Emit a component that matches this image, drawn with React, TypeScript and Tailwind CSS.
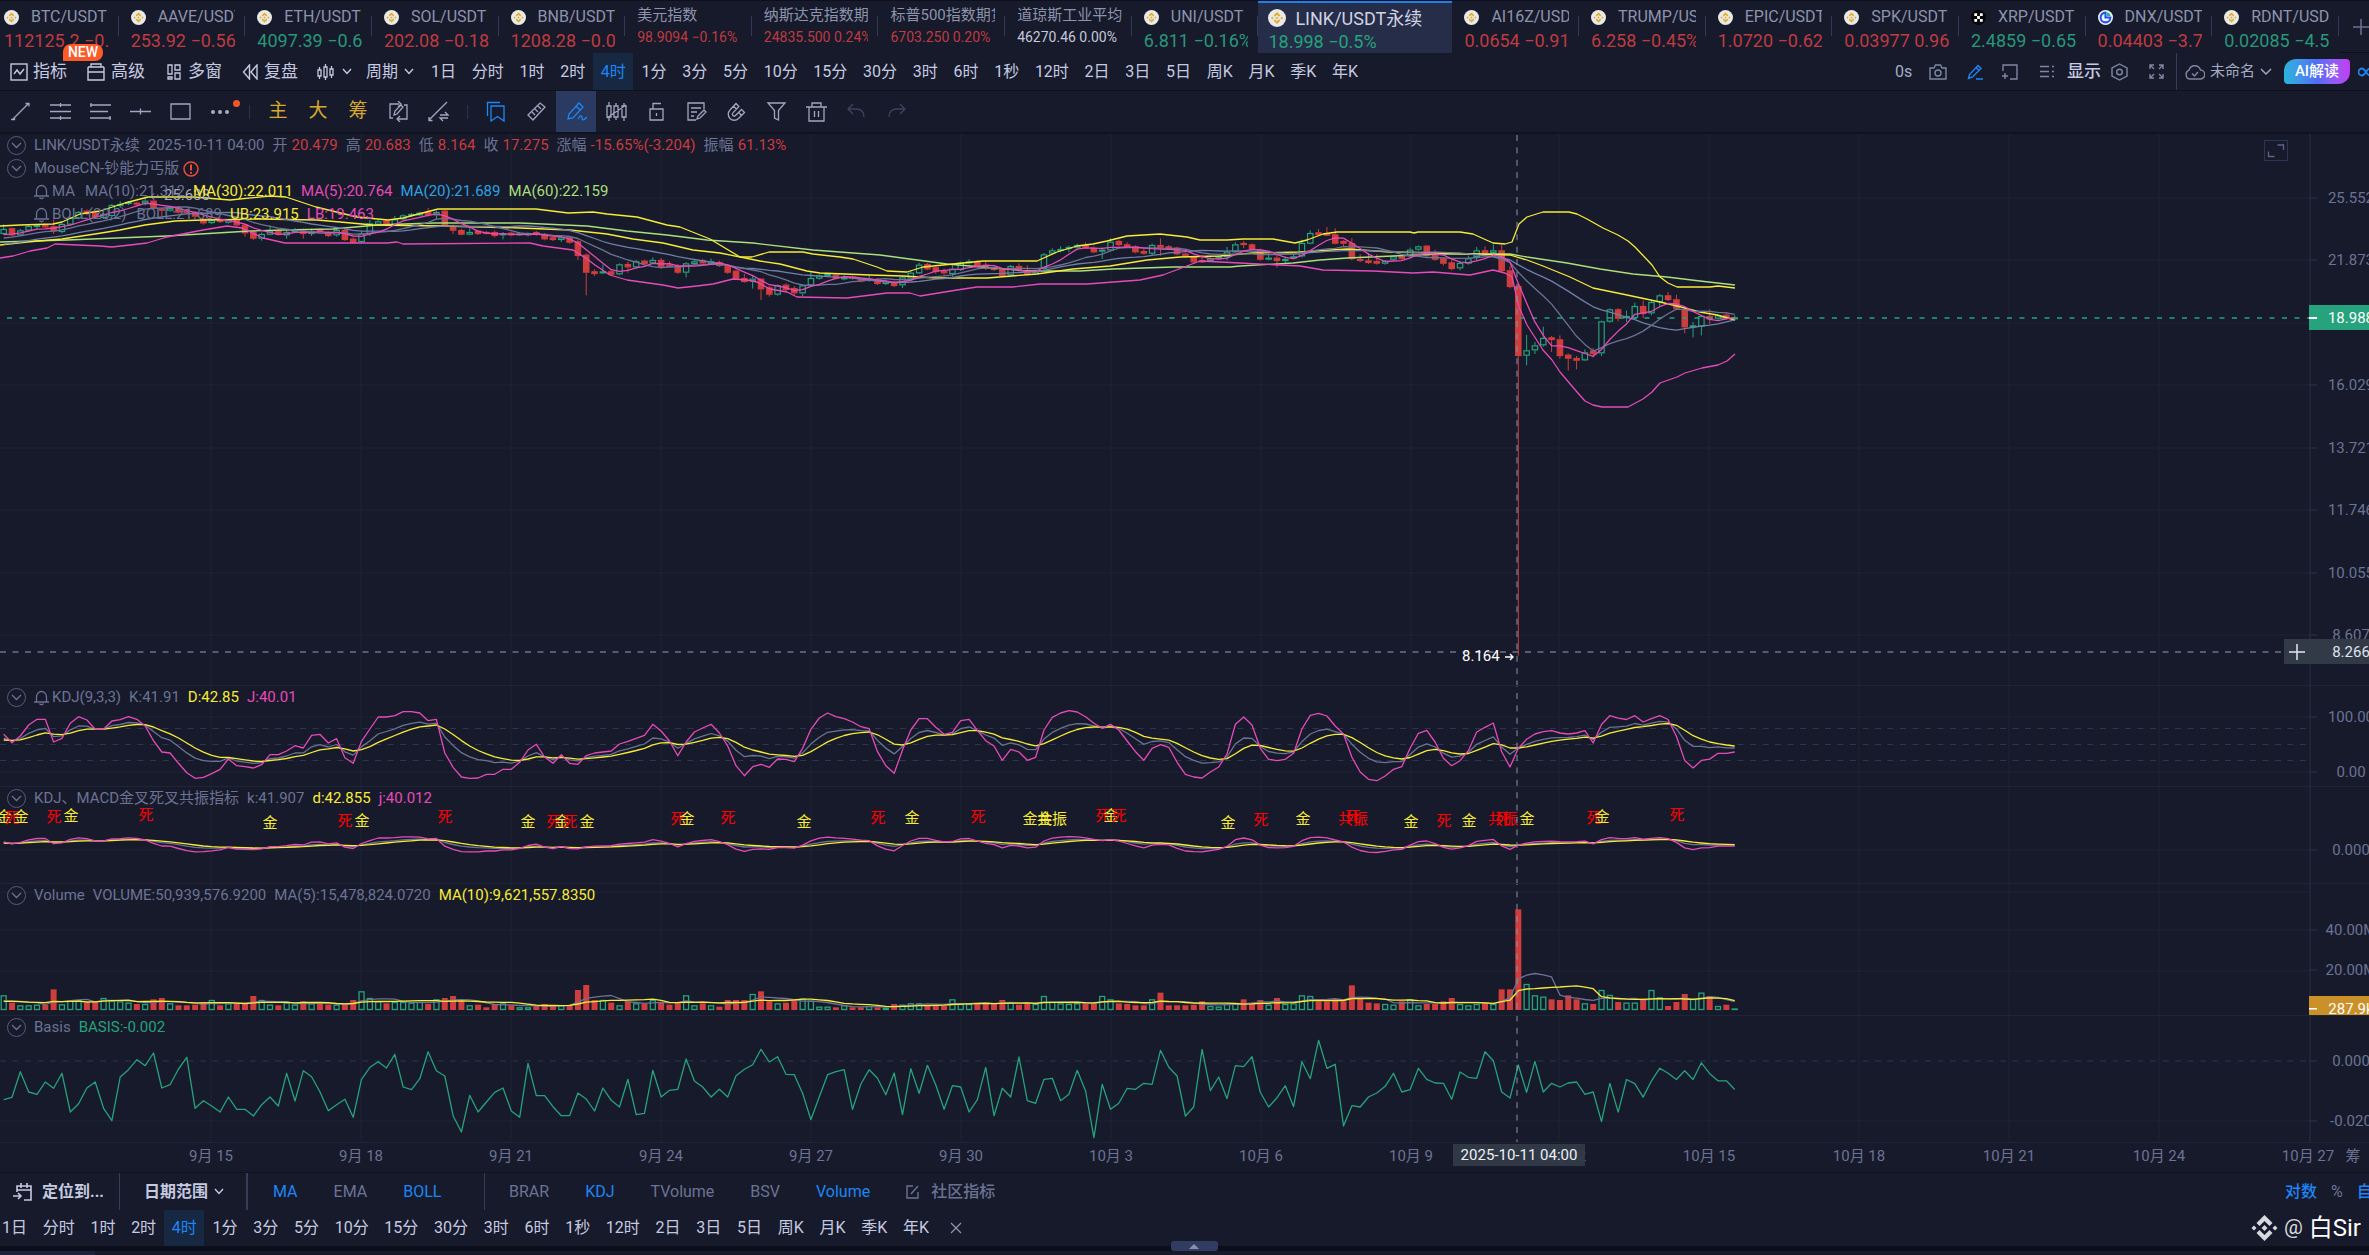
import React from 'react';

const FONT = 'font-[Roboto,"Noto_Sans_CJK_SC",sans-serif]';
const SVG_FONT = 'Roboto, "Noto Sans CJK SC", sans-serif';

const RED = '#cf3d3c';
const GREEN = '#26a27c';
const YELLOW = '#f7ec35';
const MAGENTA = '#e64bb9';
const GREY = '#6b7394';
const SLATE = '#6f7fa8';
const LIME = '#abdf7c';
const GRID = '#1d2233';

/* ---------- series data ---------- */

const STEP = 8.322;
const barX = (i: number) => 3.7 + i * STEP;

type Candle = { up: boolean; top: number; bottom: number; high: number; low: number };

function parse(base: number, text: string): Candle[] {
  return text
    .trim()
    .split(/\s+/)
    .map((item) => {
      const up = item[0] === 'g';
      const [t, b, h, l] = item.slice(1).split(',').map(Number);
      const y = (v: number) => base + v / 3;
      return { up, top: y(t), bottom: y(b), high: y(h ?? t - 3), low: y(l ?? b + 3) };
    });
}

const candles: Candle[] = [
  ...parse(
    190,
    `g117,132,103,135 r115,136,113,140 g121,136,117,138 g108,122,105,125 g105,110,103,118 r105,112 r109,124,88,132 g102,126,99,130
     g84,104 g66,85 r62,72,58,76 r68,82 g72,84 g45,78 g42,48,34,54 g36,42 r38,44 g32,40,20,46 r32,56,28,60 r56,62,54,78 g54,62
     r52,68,48,70 r62,70 r66,80 r86,100,78,104 g90,99 r88,96 g90,98 r90,106,86,110 r104,130,102,140 r124,146,120,150 g132,146,128,152
     g122,134,106,136 r122,134,118 g126,136,122,146 g120,126,114 r122,132,116,146 g124,132,116,138 r118,124,114 r126,138 g120,136,116,140
     r120,150 r146,158,142,160 g130,156,124,160 g100,132,90,138 g94,104,90,108 r92,106 g88,104,78,106 g76,88 g72,78 g68,76 r66,76,54,80
     g66,76,62,88 r62,106,60,110 r108,122,104,132 r120,134,116,136 g126,134,112,136 r122,132 r126,130 r126,138,122,142 g130,136,126,148
     r128,136 g130,134`,
  ),
  ...parse(
    210,
    `g70,76 r66,74 r72,88 r82,90 g82,90,78,96 r82,98 r94,138,88,150 r134,188,130,256 r184,192,178,198 g184,190,164,192 r184,194,178
     g163,193 r162,172,156,188 g154,172,150,176 r152,162 g150,160,142,162 r150,172,144,176 r164,168,154 r168,188,162,192 g160,188,156,202
     g154,162,150 r150,160 g154,162,146 r156,168,152 r166,188,164,192 r182,206 r204,216,192,218 g206,214,196,236 r206,238,204,270
     r232,254,228,260 g226,254 r224,240,220,244 r234,250,228,258 g226,250,222,258 g204,226,186,228 g196,206 g192,198 r194,206,190
     g202,208,196 r200,206 r206,214 g206,212,196 r208,222,204 g214,222 r216,228 g202,226,198,234 g188,206,182 g164,190,158,192 r162,178
     r172,186,170,192 r182,190,176,196 g176,192,166,200 g158,180 g154,160,148 r154,168,150,172 r164,176,154,180 r172,180 r178,198,176,200
     g168,196 r168,180,160,184 r180,194,166,196 g182,190`,
  ),
  ...parse(
    215,
    `g118,162,114,166 g106,116,100 g102,106,94,112 g96,100,92,112 g90,98,86 r90,98,82 r98,112,94 g104,110,98,132 g80,106,70,108
     r78,90,74,94 r88,96,82 r94,112 r108,116,102 g90,116,86,120 r90,98,70,122 r94,100,90 r98,118 r116,124 r124,142,122,146
     r136,140,120,144 g130,138 g124,130 g110,126,96,136 g88,112,82 r84,90,78,100 r88,102 r104,134 g128,134,116,136 r128,138,116,158
     g132,136,124,144 g124,130,118 g84,124,74,128 g54,86,46,88 r52,60,42,62 r56,60,36,62 r58,86,40,88 r78,86,76,96 r84,132,70,136
     r132,138,118 r136,144,114 r138,146,118 g138,146 g124,134 r124,132,118,134 g104,122,98 g94,104 r92,122,90,128 r116,134,104
     r130,146,128,152 r142,162,132,166 g144,160,138,166 g130,146,122 g106,126,96,136 r106,114,94 g106,114,88,124 r106,168,90,170
     r166,216,154,220`,
  ),
  ...parse(
    180,
    `r318,528,310,1427 g511,527,465,556 g496,511,486,522 g474,496,440,500 r472,480,468,516 r478,528,466,536 r524,536,520,572
     r534,542,528,568 g517,541,508,543 r512,522,504,532 g424,520,422,528 g388,425 r388,416,384,424 g408,412,392,426 g378,414,368,418
     r378,402,362,414 g366,400,360,406 g346,366,342,380 r346,360,336 r358,386,344,390 r388,442,386,460 g436,442,426,472
     g408,440,406,466 r408,418,388,432 g406,416 r404,416,396 g412,418,406,422`,
  ),
];

const upperBand =
  '0,226 20,225 53,224 62,222 80,214 100,211 125,203 148,197 194,197 230,200 270,196 286,197 316,207 357,217 388,220 403,218 438,209 536,209 568,213 593,212 607,214 637,217 667,225 680,227 710,239 740,257 752,257 769,252 803,252 813,254 840,257 853,259 877,267 887,271 907,272 923,267 963,263 983,261 1037,261 1057,252 1077,246 1093,244 1107,241 1127,236 1160,234 1187,237 1200,240 1227,240 1243,239 1273,239 1295,243 1307,240 1323,234 1337,232 1410,232 1414,233 1418,232 1460,232 1473,234 1493,243 1505,244 1512,242 1519,224 1527,217 1543,212 1569,212 1577,214 1587,219 1603,228 1618,235 1628,241 1635,247 1652,265 1660,277 1668,283 1677,287 1710,287 1718,286 1735,288';
const lowerBand =
  '0,258 13,256 30,251 47,248 55,244 100,246 112,247 130,245 147,243 167,237 203,230 227,226 242,228 263,238 285,243 387,243 397,242 403,244 530,243 543,246 573,250 587,259 595,265 610,275 627,280 663,285 678,288 697,286 713,284 733,279 747,280 757,282 770,289 787,292 797,297 847,298 887,293 910,293 920,296 957,290 977,287 1013,287 1040,284 1073,284 1087,284 1140,280 1163,275 1200,261 1240,263 1300,266 1323,270 1373,271 1413,273 1433,272 1470,275 1493,270 1505,273 1512,277 1519,307 1527,325 1543,350 1552,360 1560,372 1577,392 1585,401 1593,405 1602,407 1628,407 1643,399 1652,392 1660,383 1677,377 1685,373 1702,368 1718,365 1727,361 1735,354';
const ma30 =
  '0,245 27,242 62,239 95,234 120,230 145,225 175,221 203,220 260,219 317,220 340,222 373,225 443,226 520,228 570,230 607,234 633,239 663,243 693,250 720,253 760,261 780,264 807,271 820,273 870,275 903,276 937,278 987,278 1037,274 1073,269 1110,266 1147,260 1180,257 1220,256 1253,253 1300,252 1347,249 1390,252 1440,253 1510,255 1527,260 1543,266 1570,277 1593,288 1627,295 1660,302 1677,306 1700,312 1717,315 1735,320';
const ma60 =
  '0,242 33,241 67,240 117,238 167,236 217,233 250,231 283,230 333,229 377,225 433,223 483,223 520,223 543,224 587,226 627,231 667,235 707,240 753,243 813,250 880,255 947,264 993,268 1027,271 1080,271 1113,269 1173,267 1230,267 1240,266 1293,263 1320,260 1347,258 1393,256 1440,254 1510,254 1527,257 1567,263 1600,269 1633,274 1667,277 1700,281 1735,285';

function average(values: number[], n: number, before: (k: number) => number): number[] {
  return values.map((_, i) => {
    let sum = 0;
    for (let k = 0; k < n; k++) sum += i - k >= 0 ? values[i - k] : before(k - i);
    return sum / n;
  });
}

const closes = candles.map((c) => (c.up ? c.top : c.bottom));
const before = (k: number) => 233 + k * 1.2;
const ma5 = average(closes, 5, before);
const ma10 = average(closes, 10, before);
const ma20 = average(closes, 20, before);

const points = (ys: number[]) => ys.map((y, i) => `${barX(i).toFixed(1)},${y.toFixed(1)}`).join(' ');

const jLine = [
  ...[
    193, 218, 198, 165, 148, 148, 216, 205, 160, 140, 150, 178, 178, 153, 149, 140, 148, 168, 212, 246, 249, 280, 308, 325, 322, 311,
    298, 267, 287, 290, 294, 284, 254, 254, 243, 227, 234, 196, 193, 219, 206, 263, 280, 214, 177, 141, 141, 137, 125, 125, 129, 152,
    148, 249, 292, 321, 325, 324, 313, 313, 298, 298, 277, 240, 223, 261, 280, 254, 280, 283, 257, 249, 246, 243, 222, 214, 205, 196,
    163, 183, 213, 257, 216, 186, 174, 163, 189, 228, 287, 317, 290, 283, 292, 267, 268, 275, 235, 178, 144, 129, 140, 146, 156, 170,
    176, 245, 287, 310, 240, 180, 146, 146, 172, 193, 187, 152, 148, 181, 212, 228, 271, 238, 246, 271, 262, 180, 142, 129, 122, 126,
    140, 160, 175, 163, 180, 213, 245, 271, 235, 224, 232, 277, 313, 321, 324, 306, 291, 252, 163, 141, 165, 235, 268, 272, 268, 250,
    177, 136, 130, 138, 168, 192, 262, 306, 328, 332, 318, 298, 290, 235, 190, 181, 216, 265, 287, 272, 242, 186, 172, 159, 245, 291,
    235, 208, 192, 185, 182, 189, 192, 189, 182, 219,
  ].map((v) => 670 + v / 3),
  ...[298, 277, 283, 286, 277, 292, 284, 277, 286, 326, 384, 402, 384, 381, 367, 367, 364].map((v) => 600 + v * 0.4177),
];
const dLine: number[] = [];
jLine.forEach((j, i) => dLine.push(i === 0 ? 740 : (6 * dLine[i - 1] + j) / 7));
const kLine = jLine.map((j, i) => (j + 2 * dLine[i]) / 3);
const small = (ys: number[]) => ys.map((y) => 850.5 - ((772 - y) / 55) * 12.5);

const basis = [
  ...[
    299, 292, 215, 276, 283, 246, 265, 220, 336, 311, 264, 246, 325, 362, 231, 209, 179, 197, 159, 264, 254, 207, 172, 325, 302, 318,
    336, 291, 328, 328, 348, 314, 291, 318, 220, 303, 212, 230, 275, 332, 314, 298, 352, 238, 202, 185, 204, 163, 261, 269, 236, 155,
    212, 228, 347, 396, 286, 336, 306, 277, 264, 333, 352, 190, 287, 287, 320, 347, 347, 279, 297, 333, 264, 301, 321, 238, 344, 340,
    211, 291, 271, 268, 177, 243, 261, 291, 268, 291, 227, 208, 194, 148, 186, 170, 223, 224, 280, 359, 290, 224, 215, 209, 328, 252,
    209, 235, 284, 219, 344, 206, 280, 196, 255, 328, 257, 261, 336, 299, 202, 347, 265, 291, 171, 302, 310, 238, 235, 302, 283, 211,
    273, 413, 253, 328, 310, 265, 268, 250, 253, 151, 202, 228, 348, 321, 148, 272, 231, 296, 197, 200, 170, 277, 321, 293, 257, 320,
    185, 236, 121, 205, 193, 378, 317, 321, 291, 279, 259, 220, 276, 269, 205, 238, 249, 250, 298, 216, 232, 235, 155, 182, 276, 294,
    195, 277, 184, 276, 250, 261, 249, 246, 283, 276,
  ].map((v) => 1000 + v / 3),
  ...[1249, 1157, 1226, 1148, 1158, 1190, 1151, 1121, 1133, 1148, 1127, 1148, 1108, 1134, 1151, 1151, 1172].map((v) => 600 + v * 0.4177),
];

const volumes = [
  44, 22, 14, 14, 16, 16, 62, 17, 28, 30, 22, 26, 36, 28, 26, 22, 18, 18, 32, 36, 20, 14, 14, 16, 24, 30, 14, 20, 18, 22, 42, 30, 16, 14,
  22, 16, 26, 20, 18, 16, 16, 18, 30, 56, 36, 26, 20, 24, 24, 22, 24, 18, 32, 36, 42, 28, 14, 16, 8, 18, 20, 14, 8, 8, 12, 18, 12, 14, 14,
  60, 75, 30, 30, 22, 14, 26, 20, 18, 30, 22, 16, 24, 44, 14, 20, 14, 10, 30, 30, 30, 48, 56, 26, 20, 22, 30, 34, 28, 10, 10, 8, 14, 8, 8,
  12, 8, 6, 18, 16, 20, 20, 16, 16, 12, 32, 18, 18, 22, 20, 18, 30, 22, 16, 18, 18, 42, 24, 20, 18, 20, 22, 18, 42, 32, 20, 18, 14, 14,
  32, 52, 14, 14, 14, 16, 26, 12, 10, 18, 20, 32, 22, 30, 16, 36, 18, 20, 44, 42, 26, 26, 32, 26, 74, 34, 22, 20, 18, 16, 26, 32, 14, 18,
  18, 26, 36, 18, 14, 18, 22, 18, 62, 62, 302, 78, 44, 40, 32, 30, 44, 32, 20, 18, 60, 45, 24, 22, 22, 34, 60, 38, 12, 24, 48, 34, 52, 42,
  12, 16, 4,
];
const volMa5 = average(volumes, 5, () => 24).map((v) => 1010 - v / 3);
const volMa10 = average(volumes, 10, () => 24).map((v) => 1010 - v / 3);

/* [label, x, y, colour] */
const crossMarks: [string, number, number, string][] = [
  ['金', 4, 816, YELLOW], ['死', 12, 817, 'red'], ['金', 21, 816, YELLOW], ['死', 54, 816, 'red'], ['金', 71, 815, YELLOW],
  ['死', 146, 814, 'red'], ['金', 270, 822, YELLOW], ['死', 345, 820, 'red'], ['金', 362, 820, YELLOW], ['死', 445, 816, 'red'],
  ['金', 528, 821, YELLOW], ['死', 554, 821, 'red'], ['金', 562, 821, YELLOW], ['死', 570, 821, 'red'], ['金', 587, 821, YELLOW],
  ['死', 678, 818, 'red'], ['金', 687, 818, YELLOW], ['死', 728, 817, 'red'], ['金', 804, 821, YELLOW], ['死', 878, 817, 'red'],
  ['金', 912, 817, YELLOW], ['死', 978, 816, 'red'], ['金', 1030, 818, YELLOW], ['金', 1045, 818, YELLOW], ['共振', 1052, 818, YELLOW],
  ['死', 1103, 815, 'red'], ['金', 1111, 815, YELLOW], ['死', 1119, 815, 'red'], ['金', 1228, 822, YELLOW], ['死', 1261, 819, 'red'],
  ['金', 1303, 818, YELLOW], ['共振', 1353, 818, 'red'], ['死', 1353, 816, 'red'], ['金', 1411, 821, YELLOW], ['死', 1444, 820, 'red'],
  ['金', 1469, 820, YELLOW], ['共振', 1503, 818, 'red'], ['死', 1503, 818, 'red'], ['金', 1527, 818, YELLOW], ['死', 1594, 817, 'red'],
  ['金', 1602, 816, YELLOW], ['死', 1677, 814, 'red'],
];

const gridX = [211, 361, 511, 661, 811, 961, 1111, 1261, 1411, 1559, 1709, 1859, 2009, 2159];
const dates: [string, number][] = [
  ['9月 15', 211], ['9月 18', 361], ['9月 21', 511], ['9月 24', 661], ['9月 27', 811], ['9月 30', 961], ['10月 3', 1111],
  ['10月 6', 1261], ['10月 9', 1411], ['10月 12', 1560], ['10月 15', 1709], ['10月 18', 1859], ['10月 21', 2009], ['10月 24', 2159],
  ['10月 27', 2308],
];

/* ---------- chart parts ---------- */

type PaneProps = {
  top: number;
  height: string;
  label: string;
  rows: number[];
  ticks: [string, number][];
  legend: React.ReactNode;
  axis?: React.ReactNode;
  children: React.ReactNode;
};

function Pane({ top, height, label, rows, ticks, legend, axis, children }: PaneProps) {
  return (
    <section aria-label={label} className={`relative flex w-full border-b border-[#1f2436] ${height}`}>
      <svg className="h-full min-w-0 flex-1" role="img" aria-label={label}>
        <g transform={`translate(0 ${-top})`}>
          {gridX.map((x) => (
            <line key={x} x1={x} x2={x} y1={0} y2={1200} stroke={GRID} strokeWidth={1.5} />
          ))}
          {rows.map((y) => (
            <line key={y} x1={0} x2="100%" y1={y} y2={y} stroke={GRID} strokeWidth={1.5} />
          ))}
          {children}
          <line x1={1517} x2={1517} y1={135} y2={1142} stroke="#8b93a5" strokeWidth={1} strokeDasharray="6 6.4" />
        </g>
      </svg>
      <svg className="h-full w-[60px] shrink-0" aria-hidden="true" fontFamily={SVG_FONT} fontSize={15}>
        <g transform={`translate(0 ${-top})`}>
          <rect x={0} y={0} width={2} height={1200} fill="#1f2436" />
          {ticks.map(([text, y]) => (
            <g key={text + y}>
              <line x1={0} x2={8} y1={y} y2={y} stroke="#262b40" strokeWidth={1.5} />
              <text x={42} y={y + 5} textAnchor="middle" fill="#6b7394">{text}</text>
            </g>
          ))}
          {axis}
        </g>
      </svg>
      <div className="pointer-events-none absolute left-0 top-0 flex flex-col pl-[7px] text-[15px] leading-[23px] text-[#6b7394]">{legend}</div>
    </section>
  );
}

const Line = ({ p, c }: { p: string; c: string }) => <polyline points={p} fill="none" stroke={c} strokeWidth={1.3} strokeLinejoin="round" />;

function Toggle() {
  return (
    <button aria-label="折叠指标" className="pointer-events-auto mr-2 flex h-[19px] w-[19px] shrink-0 items-center justify-center rounded-full border border-[#555c7a]">
      <svg width="11" height="7" viewBox="0 0 11 7" fill="none" stroke="#6b7394" strokeWidth="1.3"><path d="M1 1l4.500 4.500L10 1" /></svg>
    </button>
  );
}

const Bell = () => (
  <svg className="mr-[3px] shrink-0" width="15" height="16" viewBox="0 0 15 16" fill="none" stroke="#6b7394" strokeWidth="1.300">
    <path d="M0 12h15M2.500 12V7a5 5.500 0 0 1 10 0v5M5.500 13.500a2.200 2 0 0 0 4 0" />
  </svg>
);

const LegendRow = ({ children }: { children: React.ReactNode }) => <div className="flex h-[23px] items-center whitespace-nowrap">{children}</div>;

function Charts() {
  return (
    <main className="flex flex-col bg-[#171a2b]">
      <Pane
        top={134}
        height="h-[552px]"
        label="LINK/USDT 永续 K线"
        rows={[198, 260, 323, 385, 448, 510, 573, 635]}
        ticks={[['25.552', 198], ['21.873', 260], ['16.029', 385], ['13.721', 448], ['11.746', 510], ['10.055', 573], ['8.607', 635]]}
        axis={
          <>
            <rect x={0} y={305} width={64} height={25} fill={GREEN} />
            <rect x={0} y={317} width={8} height={2} fill="#fff" />
            <text x={42} y={323} textAnchor="middle" fill="#fff">18.988</text>
            <rect x={0} y={639} width={64} height={25} fill="#323a47" />
            <text x={42} y={657} textAnchor="middle" fill="#dfe3ee">8.266</text>
          </>
        }
        legend={
          <>
            <LegendRow>
              <Toggle />
              <span className="mr-2">LINK/USDT永续</span>
              <span className="mr-2">2025-10-11 04:00</span>
              {[['开', '20.479'], ['高', '20.683'], ['低', '8.164'], ['收', '17.275'], ['涨幅', '-15.65%(-3.204)'], ['振幅', '61.13%']].map(([k, v]) => (
                <span key={k} className="mr-2 flex gap-1"><span>{k}</span><span className="text-[#c93b3e]">{v}</span></span>
              ))}
            </LegendRow>
            <LegendRow>
              <Toggle />
              <span className="mr-1">MouseCN-钞能力丐版</span>
              <svg width="16" height="16" viewBox="0 0 16 16" fill="none" stroke="#ef4b35" strokeWidth="1.500"><circle cx="8" cy="8" r="7" /><path d="M8 3.500v6M8 11v1.700" strokeWidth="2" /></svg>
            </LegendRow>
            <div className="flex h-[23px] items-center gap-2 whitespace-nowrap pl-[27px]">
              <span className="mr-[2px] flex items-center"><Bell />MA</span>
              <span>MA(10):21.312</span>
              <span className="text-[#f7ec35]">MA(30):22.011</span>
              <span className="text-[#e64bb9]">MA(5):20.764</span>
              <span className="text-[#2ca2e2]">MA(20):21.689</span>
              <span className="text-[#abdf7c]">MA(60):22.159</span>
            </div>
            <div className="flex h-[23px] items-center gap-2 whitespace-nowrap pl-[27px]">
              <span className="mr-[2px] flex items-center"><Bell />BOLL(20,2)</span>
              <span>BOLL:21.689</span>
              <span className="text-[#f7ec35]">UB:23.915</span>
              <span className="text-[#e64bb9]">LB:19.463</span>
            </div>
          </>
        }
      >
        <line x1={0} x2="100%" y1={652} y2={652} stroke="#69728a" strokeWidth={1.5} strokeDasharray="6 6.500" />
        {candles.map((c, i) => {
          const x = barX(i);
          const h = Math.max(c.bottom - c.top, 1.5);
          return (
            <g key={i} stroke={c.up ? GREEN : RED}>
              <line x1={x} x2={x} y1={c.high} y2={c.top} />
              <line x1={x} x2={x} y1={c.bottom} y2={c.low} />
              <rect x={x - 2.7} y={c.top + 0.5} width={5.400} height={Math.max(h - 1, 1)} fill={c.up ? '#171a2b' : RED} strokeWidth={1.2} />
            </g>
          );
        })}
        <line x1={0} x2="100%" y1={318} y2={318} stroke={GREEN} strokeWidth={1.3} strokeDasharray="5 7.500" strokeDashoffset={-7} />
        <Line p={ma60} c={LIME} />
        <Line p={ma30} c={YELLOW} />
        <Line p={upperBand} c={YELLOW} />
        <Line p={points(ma20)} c={SLATE} />
        <Line p={points(ma10)} c={GREY} />
        <Line p={lowerBand} c={MAGENTA} />
        <Line p={points(ma5)} c={MAGENTA} />
        <g fontFamily={SVG_FONT} fontSize={15}>
          <path d="M151 196.500h8M154 193.500l-3 3 3 3" stroke="#a6abc0" fill="none" />
          <text x={164} y={200} fill="#a6abc0">25.638</text>
          <text x={1462} y={661} fill="#fff">8.164</text>
          <path d="M1505 657h8M1510 654l3 3-3 3" stroke="#fff" fill="none" strokeWidth={1.4} />
        </g>
      </Pane>

      <Pane
        top={686}
        height="h-[101px]"
        label="KDJ"
        rows={[717, 772]}
        ticks={[['100.00', 717], ['0.00', 772]]}
        legend={
          <LegendRow>
            <Toggle /><Bell />
            <span className="mr-2">KDJ(9,3,3)</span><span className="mr-2">K:41.91</span>
            <span className="mr-2 text-[#f7ec35]">D:42.85</span><span className="text-[#e64bb9]">J:40.01</span>
          </LegendRow>
        }
      >
        {[728.5, 744.5, 760.5].map((y) => (
          <line key={y} x1={0} x2="100%" y1={y} y2={y} stroke="#2d3552" strokeDasharray="6 6.500" />
        ))}
        <Line p={points(kLine)} c={GREY} />
        <Line p={points(dLine)} c={YELLOW} />
        <Line p={points(jLine)} c={MAGENTA} />
      </Pane>

      <Pane
        top={787}
        height="h-[97px]"
        label="KDJ、MACD金叉死叉共振指标"
        rows={[850]}
        ticks={[['0.000', 850]]}
        legend={
          <LegendRow>
            <Toggle />
            <span className="mr-2">KDJ、MACD金叉死叉共振指标</span><span className="mr-2">k:41.907</span>
            <span className="mr-2 text-[#f7ec35]">d:42.855</span><span className="text-[#e64bb9]">j:40.012</span>
          </LegendRow>
        }
      >
        <Line p={points(small(kLine))} c={GREY} />
        <Line p={points(small(dLine))} c={YELLOW} />
        <Line p={points(small(jLine))} c={MAGENTA} />
        <g fontFamily={SVG_FONT} fontSize={15} textAnchor="middle">
          {crossMarks.map(([t, x, y, c], i) => (
            <text key={i} x={x} y={y + 6} fill={c}>{t}</text>
          ))}
        </g>
      </Pane>

      <Pane
        top={884}
        height="h-[132px]"
        label="Volume"
        rows={[892, 930, 971]}
        ticks={[['40.00M', 930], ['20.00M', 970]]}
        axis={
          <>
            <rect x={0} y={996} width={64} height={19} fill="#cc9029" />
            <rect x={0} y={1008} width={8} height={1.500} fill="#fff" />
            <text x={42} y={1014} textAnchor="middle" fill="#fff">287.9k</text>
          </>
        }
        legend={
          <LegendRow>
            <Toggle />
            <span className="mr-2">Volume</span><span className="mr-2">VOLUME:50,939,576.9200</span>
            <span className="mr-2">MA(5):15,478,824.0720</span><span className="text-[#f7ec35]">MA(10):9,621,557.8350</span>
          </LegendRow>
        }
      >
        {volumes.map((v, i) => {
          const up = candles[i]?.up;
          const h = Math.max(v / 3, 1.5);
          return up ? (
            <rect key={i} x={barX(i) - 2.5} y={1010.500 - h} width={5} height={h - 1} fill="#171a2b" stroke={GREEN} strokeWidth={1.3} />
          ) : (
            <rect key={i} x={barX(i) - 3} y={1010 - h} width={6} height={h} fill={RED} />
          );
        })}
        <Line p={points(volMa5)} c={GREY} />
        <Line p={points(volMa10)} c={YELLOW} />
      </Pane>

      <Pane
        top={1016}
        height="h-[127px]"
        label="Basis"
        rows={[1121]}
        ticks={[['0.000', 1061], ['-0.020', 1121]]}
        legend={
          <LegendRow>
            <Toggle />
            <span className="mr-2">Basis</span><span className="text-[#26a27c]">BASIS:-0.002</span>
          </LegendRow>
        }
      >
        <line x1={0} x2="100%" y1={1061} y2={1061} stroke="#2d3552" strokeDasharray="6 6.500" />
        <Line p={points(basis)} c={GREEN} />
      </Pane>

      <div className="relative h-[29px]">
        <svg className="h-full w-full" fontFamily={SVG_FONT} fontSize={15} textAnchor="middle" role="img" aria-label="时间轴">
          {dates.map(([t, x]) => (
            <text key={t} x={x} y={18} fill="#6b7394">{t}</text>
          ))}
          <text x={2353} y={18} fill="#6b7394">筹</text>
        </svg>
        <span className="absolute left-[1453px] top-px flex h-[22px] w-[132px] items-center justify-center bg-[#323a47]/95 text-[15px] text-[#eceff6]">2025-10-11 04:00</span>
      </div>

      <button aria-label="展开图表" className="absolute right-[81px] top-[140px] h-[21px] w-6 border border-[#2b3654]">
        <svg width="22" height="19" viewBox="0 0 22 19" fill="none" stroke="#5b6688" strokeWidth="1.300"><path d="M12.500 4h6v5M3.500 10.500v5h6" /></svg>
      </button>
      <button aria-label="添加提醒" className="absolute right-[60px] top-[639px] flex h-[25px] w-[25px] items-center justify-center bg-[#323a47]">
        <svg width="16" height="16" viewBox="0 0 16 16" stroke="#e4e7ef" strokeWidth="1.500"><path d="M8 0v16M0 8h16" /></svg>
      </button>
    </main>
  );
}

/* ---------- ticker strip ---------- */

function CoinIcon({ kind }: { kind?: string }) {
  if (kind === 'x')
    return (
      <svg className="h-full w-full" viewBox="0 0 16 16"><circle cx="8" cy="8" r="8" fill="#05060a" /><path d="M3.500 3.500h3v3h-3zM9.500 3.500h3v3h-3zM6.500 6.500h3v3h-3zM3.500 9.500h3v3h-3zM9.500 9.500h3v3h-3z" fill="#fff" /></svg>
    );
  if (kind === 'd')
    return (
      <svg className="h-full w-full" viewBox="0 0 16 16"><circle cx="8" cy="8" r="8" fill="#eef1f8" /><path d="M8 2.800a5.200 5.200 0 1 0 5.200 5.200H8z" fill="none" stroke="#2354e6" strokeWidth="2.200" /><path d="M9.500 2.500a5 5 0 0 1 4 4h-4z" fill="#23b58c" /></svg>
    );
  return (
    <svg className="h-full w-full" viewBox="0 0 16 16">
      <circle cx="8" cy="8" r="8" fill="#e9e9ea" />
      <path d="M8 2.700 5 5.700l1.200 1.200L8 5.100l1.800 1.800L11 5.700zM3.800 6.800 2.600 8l1.200 1.200L5 8zM8 6.800 6.800 8 8 9.200 9.200 8zM12.200 6.800 11 8l1.200 1.200L13.400 8zM6.200 9.100 5 10.300l3 3 3-3-1.200-1.200L8 10.900z" fill="#e3ac1f" />
    </svg>
  );
}

type Tick = { n: string; v: string; c: 'r' | 'g' | 'w'; idx?: boolean; icon?: string };
const tickers: Tick[] = [
  { n: 'BTC/USDT', v: '112125.2 −0.36%', c: 'r' },
  { n: 'AAVE/USDT', v: '253.92 −0.56%', c: 'r' },
  { n: 'ETH/USDT', v: '4097.39 −0.6%', c: 'g' },
  { n: 'SOL/USDT', v: '202.08 −0.18%', c: 'r' },
  { n: 'BNB/USDT', v: '1208.28 −0.09%', c: 'r' },
  { n: '美元指数', v: '98.9094 −0.16%', c: 'r', idx: true },
  { n: '纳斯达克指数期', v: '24835.500 0.24%', c: 'r', idx: true },
  { n: '标普500指数期货', v: '6703.250 0.20%', c: 'r', idx: true },
  { n: '道琼斯工业平均', v: '46270.46 0.00%', c: 'w', idx: true },
  { n: 'UNI/USDT', v: '6.811 −0.16%', c: 'g' },
  { n: 'LINK/USDT永续', v: '18.998 −0.5%', c: 'g' },
  { n: 'AI16Z/USDT', v: '0.0654 −0.91%', c: 'r' },
  { n: 'TRUMP/USDT', v: '6.258 −0.45%', c: 'r' },
  { n: 'EPIC/USDT', v: '1.0720 −0.62%', c: 'r' },
  { n: 'SPK/USDT', v: '0.03977 0.96%', c: 'r' },
  { n: 'XRP/USDT', v: '2.4859 −0.65%', c: 'g', icon: 'x' },
  { n: 'DNX/USDT', v: '0.04403 −3.7%', c: 'r', icon: 'd' },
  { n: 'RDNT/USDT', v: '0.02085 −4.5%', c: 'g' },
];
const tone = { r: 'text-[#bf3b40]', g: 'text-[#28977a]', w: 'text-[#c4c8da]' };

function Ticker({ t }: { t: Tick }) {
  if (t.n.startsWith('LINK'))
    return (
      <button className="flex w-[194px] shrink-0 flex-col border-t-2 border-[#1c80ea] bg-[#252d48] pl-[10px] pt-[2px] text-left">
        <span className="flex h-[26px] items-center gap-[9px] whitespace-nowrap text-[18px] text-[#cfd3e4]"><span className="h-[18px] w-[18px]"><CoinIcon /></span>{t.n}</span>
        <span className="text-[18px] leading-[22px] text-[#26a27c]">{t.v}</span>
      </button>
    );
  return (
    <button className="relative min-w-0 flex-1 pl-3 pr-[10px] text-left">
      <span className="flex h-full flex-col overflow-hidden whitespace-nowrap">
        {t.idx ? (
          <>
            <span className="mt-[3px] h-[22px] text-[15px] leading-[22px] text-[#8d93ab]">{t.n}</span>
            <span className={`text-[14px] leading-[22px] ${tone[t.c]}`}>{t.v}</span>
          </>
        ) : (
          <>
            <span className="mt-[3px] flex h-[26px] items-center gap-3 text-[16px] leading-[26px] text-[#8d93ab]"><span className="h-[15px] w-[15px] shrink-0"><CoinIcon kind={t.icon} /></span>{t.n}</span>
            <span className={`text-[18px] leading-[22px] ${tone[t.c]}`}>{t.v}</span>
          </>
        )}
      </span>
      <span className="absolute right-0 top-[15px] h-5 w-px bg-[#333a57]" />
    </button>
  );
}

/* ---------- toolbars ---------- */

const Ico = ({ w = 20, h = 20, c = 'currentColor', sw = '1.4', children }: { w?: number; h?: number; c?: string; sw?: string; children: React.ReactNode }) => (
  <svg className="shrink-0" width={w} height={h} viewBox={`0 0 ${w} ${h}`} fill="none" stroke={c} strokeWidth={sw} aria-hidden="true">{children}</svg>
);
const Chevron = ({ w = 10 }: { w?: number }) => (
  <Ico w={w} h={7}><path d={w === 12 ? 'M1 1l5 5 5-5' : 'M1 1l4 4.500L9 1'} /></Ico>
);

const periods = ['1日', '分时', '1时', '2时', '4时', '1分', '3分', '5分', '10分', '15分', '30分', '3时', '6时', '1秒', '12时', '2日', '3日', '5日', '周K', '月K', '季K', '年K'];

function Periods({ className }: { className: string }) {
  return (
    <nav aria-label="周期" className={`flex w-[942px] shrink-0 items-stretch justify-between text-[16px] text-[#c5cae0] ${className}`}>
      {periods.map((p) => (
        <button key={p} className={`whitespace-nowrap pl-2 pr-[7px] ${p === '4时' ? 'bg-[#172843] text-[#1e86f5]' : ''}`}>{p}</button>
      ))}
    </nav>
  );
}

function Toolbar() {
  return (
    <div className="flex h-[38px] items-stretch border-b border-[#10131f] text-[17px] text-[#c5cae0]">
      <button className="ml-[10px] flex items-center gap-[5px] whitespace-nowrap">
        <Ico w={18} h={18}><rect x="1" y="1" width="16" height="16" /><path d="M4 11l3-4 3 4 4-5" /></Ico>指标
      </button>
      <button className="relative ml-5 flex items-center gap-[6px] whitespace-nowrap">
        <Ico w={18} h={18}><path d="M1 4h16M1 4v13h16V4M4 4V1h10v3M1 9h16" /></Ico>高级
        <span className="absolute -left-6 -top-[9px] flex h-[17px] w-10 items-center justify-center rounded-lg rounded-bl-none bg-[#fb5a2a] text-[14px] font-medium text-white">NEW</span>
      </button>
      <button className="ml-[22px] flex items-center gap-[7px] whitespace-nowrap">
        <Ico w={14} h={16} sw="1.3"><path d="M1 1h4v9H1zM1 13h4v2H1zM8 1h5v5H8zM8 9h5v6H8z" /></Ico>多窗
      </button>
      <button className="ml-[20px] flex items-center gap-[6px] whitespace-nowrap">
        <Ico w={16} h={16}><path d="M7.500 1v14L1.500 8zM15 1v14L9 8z" /></Ico>复盘
      </button>
      <button aria-label="图表类型" className="ml-[19px] flex items-center gap-2">
        <Ico w={17} h={18} sw="1.3"><path d="M1 7h3v6H1zM7 4h3v10H7zM13 6h3v6h-3zM2.500 4v3M2.500 13v3M8.500 1v3M8.500 14v3M14.500 3v3M14.500 12v3" /></Ico><Chevron />
      </button>
      <button className="ml-[14px] flex items-center gap-[6px] whitespace-nowrap text-[16px]">周期<Chevron /></button>
      <Periods className="ml-[9px]" />
      <div className="min-w-0 flex-1" />
      <div className="flex items-center text-[#7f87a3]">
        <button className="w-[34px] text-left text-[16px] text-[#a5abc3]">0s</button>
        <button aria-label="截图" className="w-[38px]"><Ico w={18} h={16}><path d="M1 4h4l1.500-3h5L13 4h4v11H1z" /><circle cx="9" cy="9" r="3" /></Ico></button>
        <button aria-label="画笔" className="w-[35px] text-[#1e86f5]"><Ico w={16} h={16}><path d="M1.500 14.500l1-4L11 1.500l3 3-8.500 8.500zM9 3.500l3 3M9 15h7" /></Ico></button>
        <button aria-label="新增窗口" className="w-[38px]"><Ico w={16} h={16}><path d="M1 7V1h14v14H8M0 12h6M3 9v6" /></Ico></button>
        <button className="flex items-center gap-[13px] text-[17px] font-medium text-[#c5cae0]"><Ico w={14} h={13} c="#7f87a3"><path d="M0 1.500h9M0 6.500h9M0 11.500h9M12 1.500h2M12 6.500h2M12 11.500h2" /></Ico>显示</button>
        <button aria-label="设置" className="ml-[10px] w-[38px]"><Ico w={17} h={18}><path d="M8.500 1L16 5v8l-7.500 4L1 13V5z" /><circle cx="8.500" cy="9" r="2.800" /></Ico></button>
        <button aria-label="全屏" className="w-[27px]"><Ico w={15} h={15}><path d="M1 5V1h4M10 1h4v4M14 10v4h-4M5 14H1v-4M1 1l4 4M14 1l-4 4M14 14l-4-4M1 14l4-4" /></Ico></button>
        <span className="h-full w-px bg-[#363d59]" />
        <button className="ml-2 flex items-center gap-[5px] whitespace-nowrap text-[15px] text-[#a5abc3]">
          <Ico w={20} h={16} c="#7f87a3"><path d="M5 15a4 4.500 0 0 1-1-8.800A6 6 0 0 1 15.500 6 4.500 4.500 0 0 1 15 15zM7 9.500l2.500 2.500L13 8" /></Ico>未命名<Chevron w={12} />
        </button>
        <button className="ml-[12px] h-[25px] w-[66px] rounded-bl-sm rounded-br-xl rounded-tl-xl rounded-tr-sm bg-gradient-to-r from-[#28b4dc] via-[#4f6cf5] to-[#c03bf3] text-[15px] font-medium text-white">AI解读</button>
        <button aria-label="链接" className="ml-2 w-[11px] overflow-hidden text-[#1e86f5]"><Ico w={16} h={10} sw="1.8"><path d="M8 5C6 2 5 1.500 4 1.500a3.300 3.300 0 0 0 0 7C5 8.500 6 8 8 5s3-3.500 4-3.500a3.300 3.300 0 0 1 0 7C11 8.500 10 8 8 5" /></Ico></button>
      </div>
    </div>
  );
}

const tools: { l: string; d?: string; t?: string; cls?: string; sep?: boolean; dot?: boolean }[] = [
  { l: '趋势线', d: 'M3 18L18 3M1 18.500h3.500v-2M15.500 2.500h3.500v3' },
  { l: '水平线组', d: 'M0 4h21M0 10.500h21M0 17h21M10.500 2v4M10.500 15v4' },
  { l: '通道', d: 'M0 4h21M0 10.500h18M0 17h21M1 2v4M20 15v4' },
  { l: '水平线', d: 'M0 10.500h21M10.500 7.500v6' },
  { l: '矩形', d: 'M1 3h19v15H1z' },
  { l: '更多', cls: 'text-[#a8adc4]', dot: true },
  { l: '主', t: '主', sep: true },
  { l: '大', t: '大' },
  { l: '筹', t: '筹' },
  { l: '复制画线', d: 'M5 17H2V3h9M10 0l3 3-3 3M16 4h3v14h-9M12 21l-3-3 3-3M6 14l1-4 6-6 2 2-6 7z' },
  { l: '画线切换', d: 'M1 19L19 1M1 16v3.500h3.500M12 14h8l-3-3M20 17h-8l3 3' },
  { l: '书签', d: 'M5 5h13v15l-6.500-4.500L5 20zM1.500 15V1.500H14', cls: 'text-[#1e86f5]', sep: true },
  { l: '测量', d: 'M2 14L14 2l5 4L7 19zM6 11l3 3M9 8l3 3M12 5l3 3' },
  { l: '铅笔', d: 'M2 18l1-5L13 2l4 4L7 17zM10 5l4 4M12 18c2-4 4-4 4-1s2 2 5-1', cls: 'bg-[#2a3a60] text-[#1e86f5]' },
  { l: '蜡烛', d: 'M1 5h4v11H1zM8 5h4v11H8zM16 5h4v11h-4zM3 1v4M3 16v4M10 2v3M10 16v3M18 2v3M18 16v4M1 17L20 4' },
  { l: '锁定', d: 'M4 8h13v11H4zM7 8V2.500h8M10.500 12v3' },
  { l: '备注', d: 'M18 8V2H2v17h8M5 7h10M5 11h6M5 15h3M11 18l1-3 6-6 2 2-6 6z' },
  { l: '磁铁', d: 'M10 2.500L4 9a6 6 0 0 0 8.500 8.500l6-6-3-3-6 6a1.800 1.800 0 0 1-2.600-2.600l6-6.400zM10.500 8l-3-2.800M15.500 14.500l-2.800-3' },
  { l: '筛选', d: 'M2 2h17l-6.500 7.500V19l-4-2V9.500z' },
  { l: '删除', d: 'M0 6h21M6 6V2h9v4M3 6v14h15V6M8.500 10v6M12.500 10v6' },
  { l: '撤销', d: 'M2 8h8c5 0 8 3 8 8M7 3L2 8l5 5', cls: 'text-[#3c435f]' },
  { l: '重做', d: 'M19 8h-8c-5 0-8 3-8 8M14 3l5 5-5 5', cls: 'text-[#3c435f]' },
];

function DrawBar() {
  return (
    <div className="flex h-[43px] items-center border-b-2 border-[#10131f] text-[#a0a6bf]">
      {tools.map((t) => (
        <React.Fragment key={t.l}>
          {t.sep && <span className="ml-[9px] mr-2 h-[14px] w-px bg-[#2b3250]" />}
          <button aria-label={t.l} className={`relative flex h-full w-10 shrink-0 items-center justify-center ${t.cls ?? ''}`}>
            {t.t ? (
              <span className="text-[19px] text-[#d9a92c]">{t.t}</span>
            ) : t.dot ? (
              <>
                <span className="flex gap-[3px]"><i className="h-1 w-1 rounded-full bg-current" /><i className="h-1 w-1 rounded-full bg-current" /><i className="h-1 w-1 rounded-full bg-current" /></span>
                <i className="absolute right-0 top-[9px] h-[7px] w-[7px] rounded-full bg-[#f4562c]" />
              </>
            ) : (
              <Ico w={21} h={21} sw="1.3"><path d={t.d} /></Ico>
            )}
          </button>
        </React.Fragment>
      ))}
    </div>
  );
}

const overlays: [string, boolean][] = [['MA', true], ['EMA', false], ['BOLL', true]];
const studies: [string, boolean][] = [['BRAR', false], ['KDJ', true], ['TVolume', false], ['BSV', false], ['Volume', true]];

const Study = ({ s }: { s: [string, boolean] }) => <button className={s[1] ? 'text-[#1e86f5]' : 'text-[#6b7394]'}>{s[0]}</button>;

function BottomBars() {
  return (
    <footer className="relative">
      <div className="flex h-[38px] items-center whitespace-nowrap border-t border-[#10131f] text-[16px]">
        <button className="ml-[13px] flex w-[106px] items-center gap-[9px] font-bold text-[#c5cae0]">
          <Ico w={20} h={18} sw="1.6"><path d="M4 9V3h14v14h-7M4 7h14M8 0v5M14 0v5M0 13h8M5 10l3 3-3 3" /></Ico>定位到...
        </button>
        <span className="h-full w-px bg-[#363d59]" />
        <button className="ml-6 flex w-[102px] items-center gap-[6px] font-bold text-[#c5cae0]">日期范围<Chevron /></button>
        <span className="h-full w-[2px] bg-[#363d59]" />
        <div className="ml-[25px] flex w-[211px] gap-9">{overlays.map((s) => <Study key={s[0]} s={s} />)}</div>
        <span className="h-full w-px bg-[#363d59]" />
        <div className="ml-[24px] flex gap-9">{studies.map((s) => <Study key={s[0]} s={s} />)}</div>
        <button className="ml-9 flex items-center gap-[12px] font-medium text-[#6b7394]">
          <Ico w={13} h={14}><path d="M7 1H1v12h11V7M5 9l7-8" /></Ico>社区指标
        </button>
        <div className="flex-1" />
        <div className="flex w-[84px] gap-[14px] overflow-hidden">
          <button className="font-medium text-[#1e86f5]">对数</button>
          <button className="text-[#6b7394]">%</button>
          <button className="font-medium text-[#1e86f5]">自动</button>
        </div>
      </div>
      <div className="flex h-[36px] items-stretch">
        <Periods className="-ml-[6px]" />
        <button aria-label="关闭" className="ml-[14px] text-[#8d93ab]"><Ico w={12} h={12} sw="1.3"><path d="M1 1l10 10M11 1L1 11" /></Ico></button>
        <div className="flex-1" />
        <div className="mr-2 flex items-center gap-[6px] whitespace-nowrap text-[24px] text-white">
          <svg width="27" height="28" viewBox="0 0 27 28" fill="#d8d9de"><path d="M13.500 1 5.500 9l3 3 5-5 5 5 3-3zM3 11.500.5 14 3 16.500 5.500 14zM13.500 11l-3 3 3 3 3-3zM24 11.500 21.500 14l2.500 2.500L26.500 14zM8.500 16l-3 3 8 8 8-8-3-3-5 5z" /></svg>
          <span className="text-[21px] text-[#d8d9de]">@</span>
          <span>白Sir</span>
        </div>
      </div>
      <div className="h-[5px] bg-[#0c0f1b]" />
      <div className="h-1 bg-[#171a2b]"><div className="h-full w-[95px] bg-[#1d2439]" /></div>
      <button aria-label="展开面板" className="absolute bottom-1 left-1/2 -ml-[14px] flex h-[10px] w-[47px] items-center justify-center rounded-[3px] bg-[#303c60]">
        <svg width="10" height="5" viewBox="0 0 10 5" fill="#8790ad"><path d="M5 0l5 5H0z" /></svg>
      </button>
    </footer>
  );
}

export default function App() {
  return (
    <div className={`relative w-full overflow-hidden bg-[#171a2b] ${FONT}`}>
      <header>
        <div className="flex h-[53px] items-stretch border-t border-[#0d101c]">
          <div className="-ml-2 flex min-w-0 flex-1 items-stretch">{tickers.map((t) => <Ticker key={t.n} t={t} />)}</div>
          <button aria-label="添加" className="flex w-[30px] items-center justify-end border-b border-[#0d101c]">
            <svg width="16" height="16" viewBox="0 0 16 16" stroke="#6b7394" strokeWidth="1.500"><path d="M8 0v16M0 8h16" /></svg>
          </button>
        </div>
        <Toolbar />
        <DrawBar />
      </header>
      <Charts />
      <BottomBars />
    </div>
  );
}
